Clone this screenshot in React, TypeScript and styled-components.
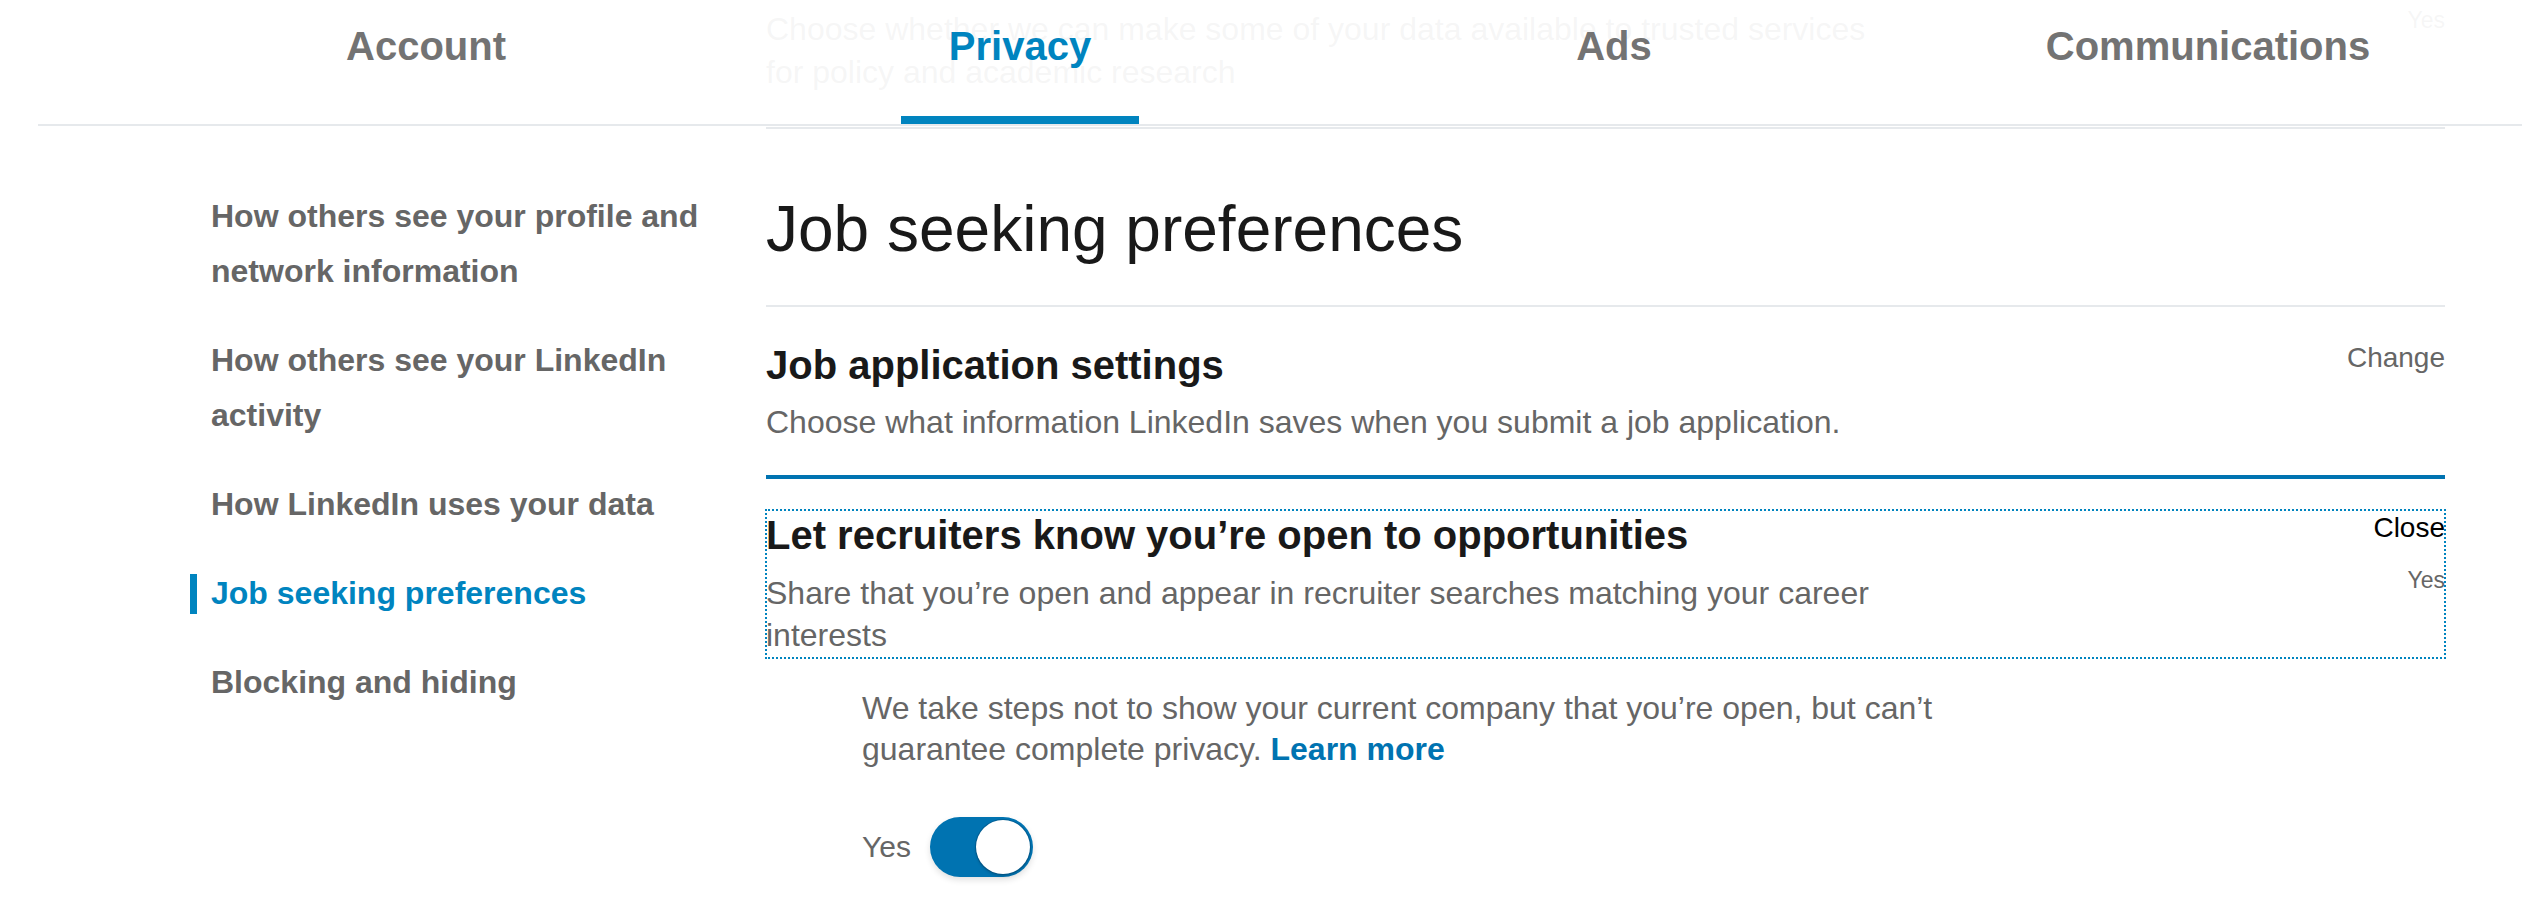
import * as React from 'react'
import styled, { createGlobalStyle } from 'styled-components'

const GlobalStyle = createGlobalStyle`
  * {
    box-sizing: border-box;
  }
  body {
    margin: 0;
    background: #ffffff;
    font-family: 'Liberation Sans', Arial, Helvetica, sans-serif;
    color: #191919;
  }
`

const tabs = ['Account', 'Privacy', 'Ads', 'Communications']

const sideNav = [
  'How others see your profile and network information',
  'How others see your LinkedIn activity',
  'How LinkedIn uses your data',
  'Job seeking preferences',
  'Blocking and hiding',
]

export default function App() {
  return (
    <Page>
      <GlobalStyle />
      <Top>
        <Ghost aria-hidden>
          <GhostSection>
            <GhostText>
              Choose whether we can make some of your data available to trusted services for
              policy and academic research
            </GhostText>
            <GhostValue>Yes</GhostValue>
          </GhostSection>
        </Ghost>
        <TabBar>
          {tabs.map((tab) => (
            <Tab key={tab} href="#" $active={tab === 'Privacy'}>
              {tab}
            </Tab>
          ))}
        </TabBar>
      </Top>

      <Body>
        <Sidebar>
          {sideNav.map((entry) => {
            const active = entry === 'Job seeking preferences'
            return (
              <SideItem key={entry}>
                <Marker $active={active} />
                <SideLink href="#" $active={active}>
                  {entry}
                </SideLink>
              </SideItem>
            )
          })}
        </Sidebar>

        <Main>
          <Heading>Job seeking preferences</Heading>

          <Setting>
            <SettingHeader>
              <div>
                <SettingTitle>Job application settings</SettingTitle>
                <SettingDesc>
                  Choose what information LinkedIn saves when you submit a job application.
                </SettingDesc>
              </div>
              <Action href="#">Change</Action>
            </SettingHeader>
          </Setting>

          <ExpandedSetting>
            <FocusHeader>
              <div>
                <SettingTitle>Let recruiters know you’re open to opportunities</SettingTitle>
                <ShareDesc>
                  Share that you’re open and appear in recruiter searches matching your career
                  interests
                </ShareDesc>
              </div>
              <HeaderSide>
                <Action href="#" $dark>
                  Close
                </Action>
                <Value>Yes</Value>
              </HeaderSide>
            </FocusHeader>

            <ExpandedBody>
              <Note>
                We take steps not to show your current company that you’re open, but can’t
                guarantee complete privacy. <LearnMore href="#">Learn more</LearnMore>
              </Note>
              <ToggleRow>
                <ToggleLabel>Yes</ToggleLabel>
                <Switch role="switch" aria-checked="true">
                  <Knob />
                </Switch>
              </ToggleRow>
            </ExpandedBody>
          </ExpandedSetting>
        </Main>
      </Body>
    </Page>
  )
}

const Page = styled.div`
  width: 2522px;
  min-height: 918px;
  overflow: hidden;
`

const Top = styled.div`
  display: grid;

  & > * {
    grid-area: 1 / 1;
  }
`

const Ghost = styled.div`
  align-self: start;
  display: grid;
  grid-template-columns: 576px 1679px;
  padding-left: 190px;
`

const GhostSection = styled.div`
  grid-column: 2;
  display: flex;
  justify-content: space-between;
  align-items: flex-start;
  padding: 8px 0 33px;
  border-bottom: 2px solid #e6e9ec;
`

const GhostText = styled.p`
  margin: 0;
  max-width: 1120px;
  font-size: 32px;
  line-height: 43px;
  color: #666666;
`

const GhostValue = styled.span`
  margin-top: -2px;
  font-size: 23px;
  line-height: 28px;
  color: #666666;
`

const TabBar = styled.nav`
  z-index: 1;
  align-self: start;
  margin-left: 38px;
  display: grid;
  grid-template-columns: repeat(4, 594px);
  justify-items: center;
  padding-left: 91px;
  background: rgba(255, 255, 255, 0.94);
  border-bottom: 2px solid #e6e9ec;
`

const Tab = styled.a<{ $active?: boolean }>`
  display: block;
  padding: 21px 48px 45px;
  font-size: 40px;
  line-height: 50px;
  font-weight: 700;
  text-decoration: none;
  color: ${(p) => (p.$active ? '#0084bf' : '#737373')};
  border-bottom: 8px solid ${(p) => (p.$active ? '#0084bf' : 'transparent')};
`

const Body = styled.div`
  display: grid;
  grid-template-columns: 576px 1679px;
  align-items: start;
  padding-left: 190px;
`

const Sidebar = styled.ul`
  list-style: none;
  margin: 0;
  padding: 43px 0 0;
`

const SideItem = styled.li`
  display: flex;
  gap: 14px;
  padding: 17px 0;
`

const Marker = styled.span<{ $active?: boolean }>`
  flex: none;
  align-self: center;
  width: 7px;
  height: 40px;
  background: ${(p) => (p.$active ? '#0084bf' : 'transparent')};
`

const SideLink = styled.a<{ $active?: boolean }>`
  max-width: 540px;
  font-size: 32px;
  line-height: 55px;
  font-weight: 700;
  text-decoration: none;
  color: ${(p) => (p.$active ? '#0084bf' : '#666666')};
`

const Main = styled.main`
  display: flex;
  flex-direction: column;
`

const Heading = styled.h1`
  margin: 0;
  padding: 64px 0 40px;
  font-size: 64px;
  line-height: 72px;
  font-weight: 400;
  color: #191919;
  border-bottom: 2px solid #e6e9ec;
`

const Setting = styled.section`
  padding: 33px 0 32px;
`

const SettingHeader = styled.div`
  display: flex;
  justify-content: space-between;
  align-items: flex-start;
`

const SettingTitle = styled.h2`
  margin: 0;
  font-size: 40px;
  line-height: 50px;
  font-weight: 700;
  color: #191919;
`

const SettingDesc = styled.p`
  margin: 11px 0 0;
  max-width: 1120px;
  font-size: 32px;
  line-height: 42px;
  color: #666666;
`

const ShareDesc = styled(SettingDesc)`
  margin-top: 12px;
`

const Action = styled.a<{ $dark?: boolean }>`
  font-size: 28px;
  line-height: 36px;
  text-decoration: none;
  color: ${(p) => (p.$dark ? '#000000' : '#666666')};
`

const ExpandedSetting = styled.section`
  border-top: 4px solid #0073b1;
  padding-top: 31px;
`

const FocusHeader = styled.div`
  display: flex;
  justify-content: space-between;
  align-items: flex-start;
  padding-bottom: 2px;
  outline: 2px dotted #0084bf;
  outline-offset: -1px;
`

const HeaderSide = styled.div`
  display: flex;
  flex-direction: column;
  align-items: flex-end;
`

const Value = styled.span`
  margin-top: 20px;
  font-size: 23px;
  line-height: 28px;
  color: #666666;
`

const ExpandedBody = styled.div`
  padding-left: 96px;
  margin-top: 30px;
`

const Note = styled.p`
  margin: 0;
  max-width: 1120px;
  font-size: 32px;
  line-height: 41px;
  color: #666666;
`

const LearnMore = styled.a`
  font-weight: 700;
  color: #0073b1;
  text-decoration: none;
`

const ToggleRow = styled.div`
  display: flex;
  align-items: center;
  gap: 19px;
  margin-top: 47px;
`

const ToggleLabel = styled.span`
  font-size: 30px;
  line-height: 36px;
  color: #666666;
`

const Switch = styled.span`
  display: flex;
  justify-content: flex-end;
  align-items: center;
  width: 103px;
  height: 60px;
  padding: 0 3px;
  border-radius: 30px;
  background: #0073b1;
  box-shadow: 0 3px 6px rgba(0, 0, 0, 0.12);
`

const Knob = styled.span`
  width: 54px;
  height: 54px;
  border-radius: 50%;
  background: #ffffff;
  box-shadow: 0 0 0 1px rgba(0, 60, 100, 0.35), 0 2px 3px rgba(0, 0, 0, 0.2);
`
